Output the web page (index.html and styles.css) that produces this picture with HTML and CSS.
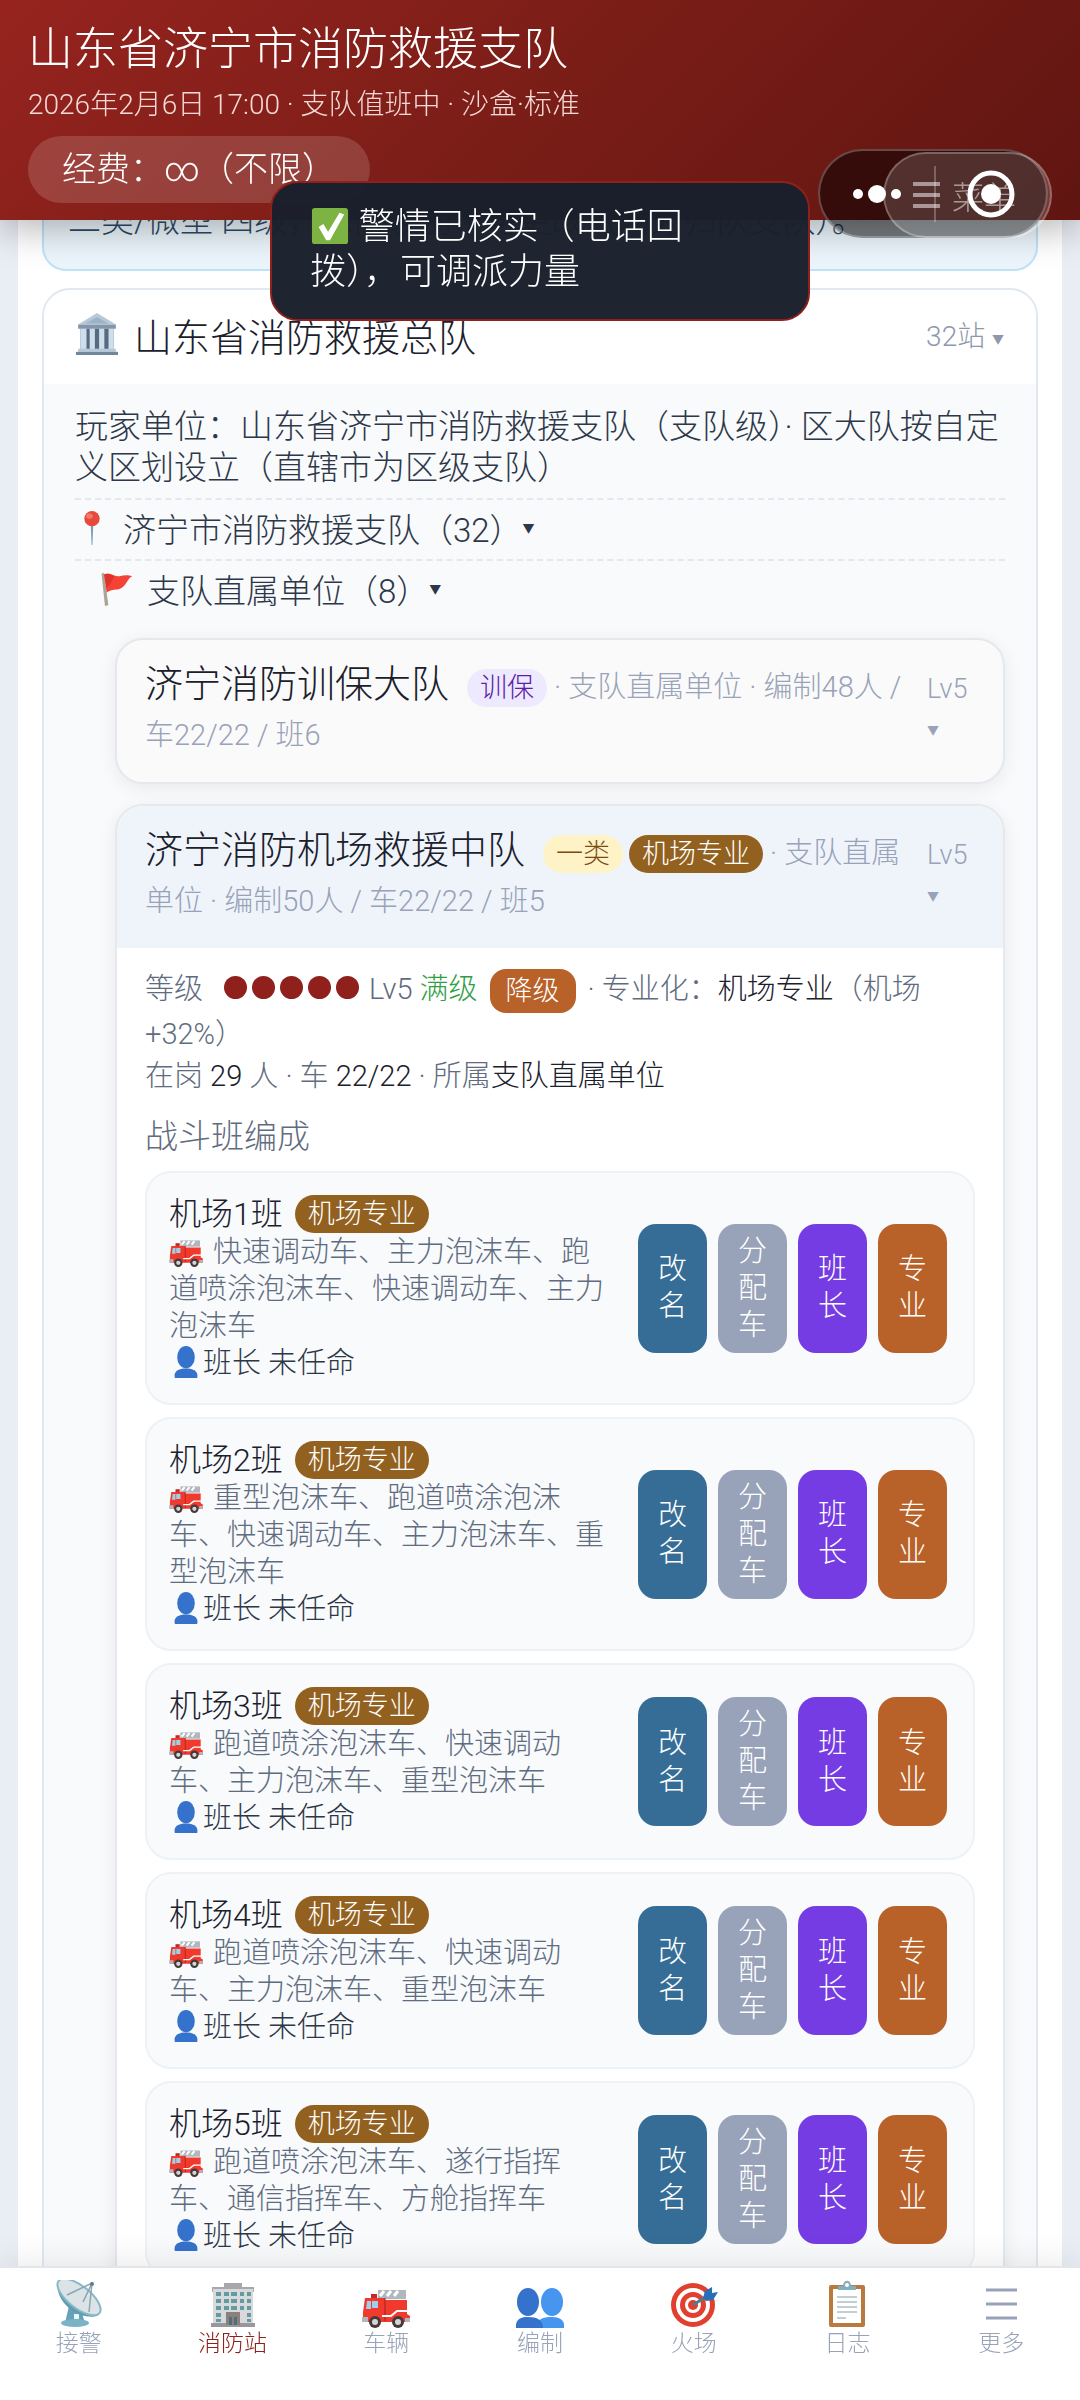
FILE: index.html
```html
<!DOCTYPE html>
<html lang="zh-CN">
<head>
  <meta charset="UTF-8">
  <meta name="viewport" content="width=device-width, initial-scale=1.0">
  <title>山东省济宁市消防救援支队</title>
  <link rel="stylesheet" href="styles.css">
</head>
<body>
  <!-- icons -->
  <svg class="sprite" aria-hidden="true">
    <symbol id="i-check" viewBox="0 0 40 40">
      <rect x="1" y="1" width="38" height="38" rx="3" fill="#7cb342"/>
      <path d="M8 21l5-3 5 8L30 6l5 2-15 27h-4z" fill="#fff"/>
    </symbol>
    <symbol id="i-hall" viewBox="0 0 40 40">
      <path d="M20 0L38 11H2z" fill="#b7c9d9"/>
      <path d="M20 4l11 6H9z" fill="#9db2c5"/>
      <rect x="2" y="11" width="36" height="4" fill="#8297ab"/>
      <rect x="4" y="15" width="32" height="20" fill="#566b80"/>
      <path d="M4 15h6v20H4zM13 15h5v20h-5zM22 15h5v20h-5zM31 15h5v20h-5z" fill="#cfdeea"/>
      <rect x="2" y="34" width="36" height="3" fill="#b7c9d9"/>
      <rect x="0" y="37" width="40" height="3" fill="#71879c"/>
    </symbol>
    <symbol id="i-pin" viewBox="0 0 40 40">
      <path d="M18.500 16h3l-1 24h-1z" fill="#7b9fb5"/>
      <circle cx="20" cy="9" r="9" fill="#e64a3b"/>
      <ellipse cx="17" cy="6" rx="4" ry="3" fill="#f27a6c"/>
    </symbol>
    <symbol id="i-flag" viewBox="0 0 40 40">
      <path d="M3 2l3-1 5 38-4 1z" fill="#a9a597"/>
      <path d="M6 3c7-4 12 3 18 2 5-1 9-2 15 0-6 3-6 10-13 14-6 3-10 0-17 5z" fill="#f44336"/>
      <path d="M6 3c5-2 9 1 12 2-3 5-4 10-9 14z" fill="#e0322a"/>
    </symbol>
    <symbol id="i-truck" viewBox="0 0 48 40">
      <path d="M16 2h28v9H16z" fill="#b0b8bd"/>
      <path d="M18 8l4-5M25 8l4-5M32 8l4-5" stroke="#fff" stroke-width="3"/>
      <rect x="9" y="6" width="6" height="5" fill="#c62828"/>
      <path d="M3 10h20v2h22v14l3 2v6H1V24z" fill="#f03a2e"/>
      <path d="M5 13h4v8H4zM10 13h6v7h-6z" fill="#9fd0ea"/>
      <path d="M23 10v23" stroke="#a52019" stroke-width="1"/>
      <path d="M20 28h9l6-5h13" stroke="#fff" stroke-width="2" fill="none"/>
      <path d="M0 29h6v5H0zM43 30h5v4h-5z" fill="#b0b8bd"/>
      <circle cx="13" cy="34" r="6" fill="#46393b"/><circle cx="13" cy="34" r="3" fill="#d5d5d5"/>
      <circle cx="36" cy="34" r="6" fill="#46393b"/><circle cx="36" cy="34" r="3" fill="#d5d5d5"/>
    </symbol>
    <symbol id="i-person" viewBox="0 0 32 40">
      <ellipse cx="16" cy="14" rx="11" ry="14" fill="#3572cc"/>
      <path d="M2 40c-2-9 5-12 14-12s16 3 14 12z" fill="#3572cc"/>
    </symbol>
    <symbol id="i-dish" viewBox="0 0 48 48">
      <path d="M14 26l-4 17h20l-4-13z" fill="#68a0b6"/>
      <ellipse cx="20" cy="43" rx="14" ry="4" fill="#7ab3c6"/>
      <rect x="19" y="34" width="5" height="5" fill="#e8f6fa"/>
      <path d="M4 1C-2 12 12 33 30 36c8 2 14 0 15-3z" fill="#5f9db3"/>
      <ellipse cx="24" cy="17" rx="26" ry="11" transform="rotate(38 24 17)" fill="#dbe3e6" stroke="#88b8c8" stroke-width="2"/>
      <path d="M12 15l25-12-9 19M37 3L34 32" stroke="#8aa6b3" stroke-width="1.500" fill="none"/>
      <circle cx="37" cy="4" r="2" fill="#607d8b"/>
    </symbol>
    <symbol id="i-building" viewBox="0 0 48 48">
      <path d="M15 3h18v4h12v5H3V7h12z" fill="#a8a8ac"/>
      <rect x="4" y="9" width="40" height="36" fill="#d9d8da"/>
      <rect x="2" y="43" width="44" height="4" fill="#98989c"/>
      <path d="M7 12h5v4H7zM15 12h5v4h-5zM22 12h6v4h-6zM31 12h4v4h-4zM38 12h4v4h-4zM7 19h5v4H7zM15 19h5v4h-5zM22 19h6v4h-6zM31 19h4v4h-4zM38 19h4v4h-4zM7 26h5v4H7zM15 26h5v4h-5zM22 26h6v4h-6zM31 26h4v4h-4zM38 26h4v4h-4zM7 33h5v4H7zM38 33h4v4h-4zM7 39h5v3H7zM38 39h4v3h-4z" fill="#629ca3"/>
      <path d="M17 32h14v13H17z" fill="#8d7f7c"/>
      <path d="M20 37h3v8h-3zM25 37h3v8h-3z" fill="#4b6f7d"/>
    </symbol>
    <symbol id="i-group" viewBox="0 0 48 40">
      <ellipse cx="36" cy="14" rx="11" ry="14" fill="#4695ee"/>
      <path d="M20 40c0-9 7-11 16-11 10 0 13 5 12 11z" fill="#4695ee"/>
      <ellipse cx="12" cy="14" rx="11" ry="14" fill="#3572cc"/>
      <path d="M0 40c-1-9 5-11 12-11 9 0 15 3 15 11z" fill="#3572cc"/>
    </symbol>
    <symbol id="i-target" viewBox="0 0 48 48">
      <circle cx="23" cy="25" r="22" fill="#e2402f"/>
      <circle cx="23" cy="25" r="17" fill="#fff"/>
      <circle cx="23" cy="25" r="13" fill="#e2402f"/>
      <circle cx="23" cy="25" r="8" fill="#fff"/>
      <circle cx="23" cy="25" r="5" fill="#e2402f"/>
      <path d="M23 25l14-9" stroke="#527b96" stroke-width="3"/>
      <path d="M33 18l2-7 7-4v6l6-1-5 8-7 1z" fill="#286fb8"/>
    </symbol>
    <symbol id="i-clip" viewBox="0 0 48 48">
      <rect x="6" y="5" width="36" height="42" rx="2" fill="#ba793e"/>
      <rect x="10" y="9" width="28" height="34" fill="#fff"/>
      <path d="M14 17h20M14 22h20M14 27h20M14 32h20M14 38h9" stroke="#b0bec5" stroke-width="1.500"/>
      <path d="M15 10V6h5c0-7 8-7 8 0h5v4z" fill="#82aebf"/>
      <circle cx="24" cy="5" r="2" fill="#fff"/>
    </symbol>
  </svg>

  <header class="topbar">
    <h1>山东省济宁市消防救援支队</h1>
    <p class="clock">2026年2月6日 17:00 · 支队值班中 · 沙盒·标准</p>
    <span class="fund">经费：∞（不限）</span>
  </header>

  <button class="menu-btn"><span class="bars"></span>菜单</button>
  <div class="capsule">
    <button class="cap-btn" aria-label="更多">
      <svg width="52" height="24" viewBox="0 0 52 24" fill="#fff"><circle cx="7" cy="12" r="5"/><circle cx="26" cy="12" r="9"/><circle cx="45" cy="12" r="5"/></svg>
    </button>
    <span class="cap-line"></span>
    <button class="cap-btn" aria-label="关闭">
      <svg width="48" height="48" viewBox="0 0 48 48"><circle cx="24" cy="24" r="21" fill="none" stroke="#fff" stroke-width="5"/><circle cx="24" cy="24" r="10" fill="#fff"/></svg>
    </button>
  </div>

  <div class="toast" role="status">
    <svg class="check"><use href="#i-check"/></svg> 警情已核实（电话回拨），可调派力量
  </div>

  <main class="page">
    <div class="notice">二类/微型 四级，总队级别不可更改（均为归队支队）。</div>

    <section class="brigade">
      <div class="brigade-head">
        <svg class="hall"><use href="#i-hall"/></svg>
        <h2>山东省消防救援总队</h2>
        <span class="count">32站 <small>▼</small></span>
      </div>
      <div class="brigade-body">
        <p class="intro">玩家单位：山东省济宁市消防救援支队（支队级）· 区大队按自定义区划设立（直辖市为区级支队）</p>
        <div class="tree"><svg class="mark"><use href="#i-pin"/></svg>济宁市消防救援支队（32）<small>▼</small></div>
        <div class="tree sub"><svg class="mark"><use href="#i-flag"/></svg>支队直属单位（8）<small>▼</small></div>

        <article class="station">
          <div class="station-head">
            <div class="station-info"><h3>济宁消防训保大队</h3><span class="tag purple">训保</span> · 支队直属单位 · 编制48人 / 车22/22 / 班6</div>
            <div class="level">Lv5 <small>▼</small></div>
          </div>
        </article>

        <article class="station open">
          <div class="station-head">
            <div class="station-info"><h3>济宁消防机场救援中队</h3><span class="tag yellow">一类</span><span class="tag brown">机场专业</span> · 支队直属单位 · 编制50人 / 车22/22 / 班5</div>
            <div class="level">Lv5 <small>▼</small></div>
          </div>
          <div class="station-body">
            <p>等级 <span class="dots"><i></i><i></i><i></i><i></i><i></i></span>Lv5 <span class="max">满级</span><button class="down">降级</button>· 专业化：<b>机场专业</b>（机场 +32%）</p>
            <p>在岗 <b>29</b> 人 · 车 <b>22/22</b> · 所属<b>支队直属单位</b></p>
            <h4>战斗班编成</h4>

            <div class="team">
              <div class="team-info">
                <div class="team-name">机场1班<span class="tag brown">机场专业</span></div>
                <div class="cars"><svg class="truck"><use href="#i-truck"/></svg>快速调动车、主力泡沫车、跑道喷涂泡沫车、快速调动车、主力泡沫车</div>
                <div class="leader"><svg class="person"><use href="#i-person"/></svg>班长 未任命</div>
              </div>
              <div class="actions">
                <button class="rename">改名</button><button class="assign">分配车</button><button class="boss">班长</button><button class="major">专业</button>
              </div>
            </div>

            <div class="team">
              <div class="team-info">
                <div class="team-name">机场2班<span class="tag brown">机场专业</span></div>
                <div class="cars"><svg class="truck"><use href="#i-truck"/></svg>重型泡沫车、跑道喷涂泡沫车、快速调动车、主力泡沫车、重型泡沫车</div>
                <div class="leader"><svg class="person"><use href="#i-person"/></svg>班长 未任命</div>
              </div>
              <div class="actions">
                <button class="rename">改名</button><button class="assign">分配车</button><button class="boss">班长</button><button class="major">专业</button>
              </div>
            </div>

            <div class="team">
              <div class="team-info">
                <div class="team-name">机场3班<span class="tag brown">机场专业</span></div>
                <div class="cars"><svg class="truck"><use href="#i-truck"/></svg>跑道喷涂泡沫车、快速调动车、主力泡沫车、重型泡沫车</div>
                <div class="leader"><svg class="person"><use href="#i-person"/></svg>班长 未任命</div>
              </div>
              <div class="actions">
                <button class="rename">改名</button><button class="assign">分配车</button><button class="boss">班长</button><button class="major">专业</button>
              </div>
            </div>

            <div class="team">
              <div class="team-info">
                <div class="team-name">机场4班<span class="tag brown">机场专业</span></div>
                <div class="cars"><svg class="truck"><use href="#i-truck"/></svg>跑道喷涂泡沫车、快速调动车、主力泡沫车、重型泡沫车</div>
                <div class="leader"><svg class="person"><use href="#i-person"/></svg>班长 未任命</div>
              </div>
              <div class="actions">
                <button class="rename">改名</button><button class="assign">分配车</button><button class="boss">班长</button><button class="major">专业</button>
              </div>
            </div>

            <div class="team">
              <div class="team-info">
                <div class="team-name">机场5班<span class="tag brown">机场专业</span></div>
                <div class="cars"><svg class="truck"><use href="#i-truck"/></svg>跑道喷涂泡沫车、遂行指挥车、通信指挥车、方舱指挥车</div>
                <div class="leader"><svg class="person"><use href="#i-person"/></svg>班长 未任命</div>
              </div>
              <div class="actions">
                <button class="rename">改名</button><button class="assign">分配车</button><button class="boss">班长</button><button class="major">专业</button>
              </div>
            </div>
          </div>
        </article>
      </div>
    </section>
  </main>

  <nav class="tabbar">
    <a href="#alarm"><svg><use href="#i-dish"/></svg>接警</a>
    <a href="#station" class="active"><svg><use href="#i-building"/></svg>消防站</a>
    <a href="#cars"><svg class="low"><use href="#i-truck"/></svg>车辆</a>
    <a href="#staff"><svg class="low"><use href="#i-group"/></svg>编制</a>
    <a href="#fire"><svg><use href="#i-target"/></svg>火场</a>
    <a href="#log"><svg><use href="#i-clip"/></svg>日志</a>
    <a href="#more"><svg viewBox="0 0 48 48"><path d="M9 10h31M9 24h31M9 38h31" stroke="#98a2b8" stroke-width="3"/></svg>更多</a>
  </nav>
</body>
</html>
```

FILE: styles.css
```css
* {
  box-sizing: border-box;
  margin: 0;
  padding: 0;
}
body {
  height: 100vh;
  overflow: hidden;
  background: #e9edf4;
  color: #1a202c;
  font-family: Roboto, "Noto Sans CJK SC", sans-serif;
  font-weight: 300;
}
h1, h2, h3, h4, b {
  font-weight: 300;
}
button {
  border: none;
  color: #fff;
  font: inherit;
}
.sprite {
  position: absolute;
  width: 0;
  height: 0;
}
small {
  font-size: 12px;
  vertical-align: middle;
}

/* header */
.topbar {
  position: fixed;
  top: 0;
  left: 0;
  right: 0;
  z-index: 10;
  height: 220px;
  padding: 16px 28px;
  background: linear-gradient(135deg, #96231e 0%, #7d1e18 45%, #601511 100%);
  box-shadow: 0 8px 36px rgba(0, 0, 0, 0.3);
  color: #fff;
}
.topbar h1 {
  font-size: 45px;
  line-height: 68px;
}
.clock {
  font-size: 28px;
  line-height: 42px;
  color: #f5d9d7;
}
.fund {
  display: inline-block;
  margin-top: 10px;
  padding: 0 34px;
  border-radius: 34px;
  background: rgba(255, 255, 255, 0.15);
  font-size: 34px;
  line-height: 67px;
}
.menu-btn {
  position: fixed;
  top: 152px;
  right: 28px;
  z-index: 20;
  display: flex;
  align-items: center;
  gap: 12px;
  height: 86px;
  padding: 0 34px 0 28px;
  border: 2px solid rgba(255, 255, 255, 0.25);
  border-radius: 43px;
  background: rgba(255, 255, 255, 0.15);
  color: rgba(255, 255, 255, 0.5);
  font-size: 32px;
}
.bars {
  width: 27px;
  height: 26px;
  border-top: 4px solid;
  border-bottom: 4px solid;
  background: linear-gradient(currentColor, currentColor) center / 27px 4px no-repeat;
}
.capsule {
  position: fixed;
  top: 149px;
  right: 32px;
  z-index: 19;
  display: flex;
  align-items: center;
  justify-content: center;
  gap: 31px;
  width: 230px;
  height: 89px;
  border: 2px solid rgba(255, 255, 255, 0.25);
  border-radius: 45px;
  background: rgba(0, 0, 0, 0.5);
}
.cap-btn {
  display: flex;
  background: none;
}
.cap-line {
  width: 2px;
  height: 56px;
  background: rgba(255, 255, 255, 0.25);
}
.toast {
  position: fixed;
  top: 181px;
  left: 50%;
  z-index: 30;
  width: 540px;
  margin-left: -270px;
  padding: 22px 38px 24px;
  border: 2px solid #8f201c;
  border-radius: 28px;
  background: rgba(26, 32, 44, 0.98);
  color: #fff;
  font-size: 36px;
  line-height: 45px;
}
.check {
  width: 40px;
  height: 38px;
  vertical-align: -6px;
}

/* content */
.page {
  height: 100vh;
  overflow: hidden;
  margin: 0 18px;
  padding: 120px 24px 0;
  background: #fff;
}
.notice {
  height: 151px;
  margin-bottom: 17px;
  padding: 74px 24px 0;
  border: 2px solid #bee3f8;
  border-radius: 24px;
  background: #ebf5fb;
  color: #2c4a68;
  font-size: 33px;
  line-height: 50px;
  white-space: nowrap;
}
.brigade {
  border: 2px solid #e2e8f0;
  border-radius: 28px;
  overflow: hidden;
}
.brigade-head {
  display: flex;
  align-items: center;
  gap: 16px;
  height: 94px;
  padding: 0 32px 6px;
}
.brigade-head h2 {
  flex: 1;
  font-size: 38px;
}
.hall {
  width: 42px;
  height: 42px;
}
.count {
  color: #8e98ab;
  font-size: 28px;
}
.brigade-body {
  padding: 22px 31px 20px;
  background: #f8fafc;
}
.intro {
  padding-bottom: 10px;
  color: #2d3748;
  font-size: 33px;
  line-height: 41px;
}
.tree {
  display: flex;
  align-items: center;
  height: 61px;
  padding-bottom: 4px;
  border-top: 2px dashed #e2e8f0;
  color: #2d3748;
  font-size: 33px;
}
.tree.sub {
  padding-left: 24px;
}
.mark {
  width: 34px;
  height: 34px;
  margin-right: 14px;
}

.station {
  margin: 18px 0 20px 40px;
  border: 2px solid #e5e8ec;
  border-radius: 28px;
  overflow: hidden;
  background: #fafafa;
  box-shadow: 0 4px 18px rgba(0, 0, 0, 0.07);
}
.station.open {
  background: #fff;
}
.open .station-head {
  background: #eff4fb;
}
.station-head {
  display: flex;
  gap: 8px;
  padding: 23px 28px;
  color: #98a2b8;
  font-size: 29px;
  line-height: 48px;
}
.station-info {
  flex: 1;
}
.station-head h3 {
  display: inline;
  margin-right: 18px;
  color: #1a202c;
  font-size: 38px;
  line-height: 40px;
}
.level {
  width: 48px;
  font-size: 27px;
  line-height: 40px;
  padding-top: 6px;
}
.tag {
  display: inline-block;
  padding: 0 13px;
  border-radius: 19px;
  font-size: 27px;
  line-height: 38px;
}
.tag + .tag {
  margin-left: 6px;
}
.purple {
  background: #ede9fe;
  color: #5b21a6;
}
.yellow {
  background: #fef3c7;
  color: #7b4a12;
}
.brown {
  background: #92611f;
  color: #fff;
}

.station-body {
  padding: 20px 28px;
  color: #5f6c80;
  font-size: 29px;
  line-height: 42px;
}
.station-body b {
  color: #1a202c;
}
.dots {
  display: inline-flex;
  gap: 5px;
  margin: 0 10px 0 14px;
}
.dots i {
  width: 23px;
  height: 23px;
  border-radius: 50%;
  background: #8f201c;
}
.max {
  color: #2f9e44;
}
.down {
  margin: 0 12px 0 12px;
  padding: 0 16px;
  border-radius: 16px;
  background: #b86128;
  font-size: 27px;
  line-height: 44px;
  vertical-align: middle;
}
h4 {
  margin: 20px 0 14px;
  font-size: 33px;
  line-height: 40px;
}

.team {
  display: flex;
  align-items: center;
  gap: 24px;
  margin-bottom: 12px;
  padding: 21px 26px 21px 22px;
  border: 2px solid #edf2f7;
  border-radius: 26px;
  background: #f8fafc;
}
.team-info {
  flex: 1;
  line-height: 37px;
}
.team-name {
  display: flex;
  align-items: center;
  gap: 12px;
  height: 40px;
  color: #1a202c;
  font-size: 32px;
}
.truck {
  width: 34px;
  height: 28px;
  margin-right: 10px;
  vertical-align: -5px;
}
.person {
  width: 34px;
  height: 32px;
  vertical-align: -5px;
}
.leader {
  color: #2d3748;
}
.actions {
  display: flex;
  gap: 11px;
}
.actions button {
  width: 69px;
  min-height: 129px;
  padding: 9px 20px;
  border-radius: 18px;
  font-size: 29px;
  line-height: 37px;
}
.rename { background: #366d96; }
.assign { background: #98a2b8; }
.actions .boss { background: #753ce3; }
.major { background: #b86128; }

/* bottom tabs */
.tabbar {
  position: fixed;
  bottom: 0;
  left: 0;
  right: 0;
  z-index: 10;
  display: flex;
  height: 134px;
  padding: 12px 2px 0;
  border-top: 2px solid #e2e5ea;
  background: #fff;
  box-shadow: 0 -6px 30px rgba(0, 0, 0, 0.08);
}
.tabbar a {
  flex: 1;
  display: flex;
  flex-direction: column;
  align-items: center;
  color: #98a2b8;
  font-size: 23px;
  line-height: 32px;
  text-decoration: none;
}
.tabbar svg {
  width: 48px;
  height: 48px;
}
.tabbar .low {
  height: 40px;
  margin-top: 8px;
}
.tabbar .active {
  color: #8f201c;
}
```
